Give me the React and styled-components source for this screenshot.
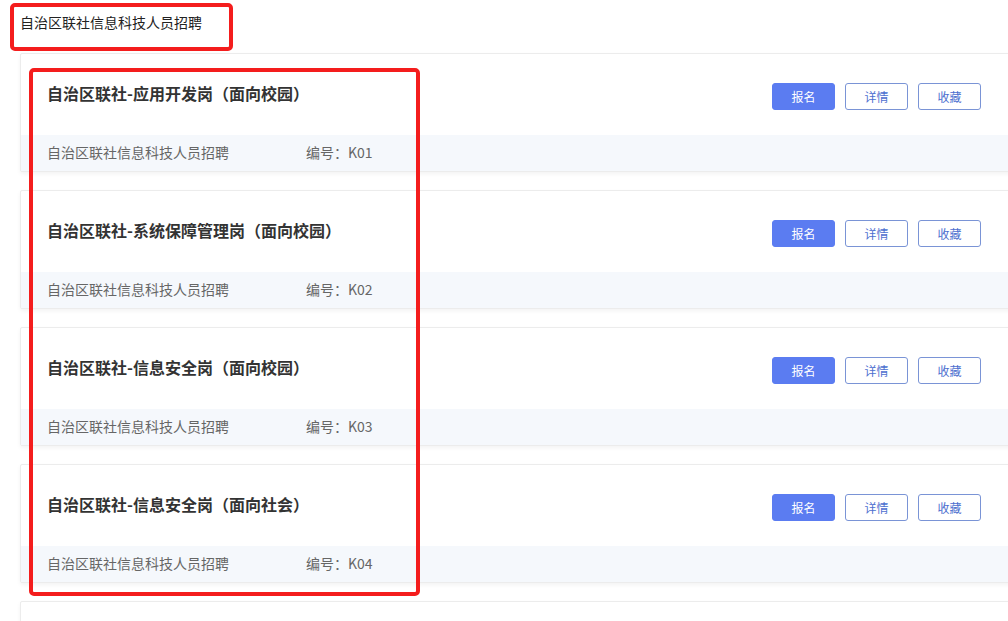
import styled, {createGlobalStyle} from 'styled-components';

const GlobalStyle = createGlobalStyle`
  html, body {
    margin: 0;
    padding: 0;
    background: #fff;
    overflow: hidden;
  }
  body {
    font-family: "Noto Sans CJK SC", "Noto Sans", sans-serif;
  }
`;

const Page = styled.div`
  position: relative;
  width: 1008px;
  height: 621px;
  overflow: hidden;
`;

const Header = styled.div`
  height: 53px;
  box-sizing: border-box;
  padding: 12px 0 0 20px;
  font-size: 14px;
  line-height: 20px;
  color: #222;
`;

const List = styled.div`
  padding-left: 20px;
`;

const Card = styled.div`
  width: 1010px;
  min-height: ${({stub}) => (stub ? '60px' : 'auto')};
  margin-bottom: 18px;
  background: #fff;
  border: 1px solid #ececec;
  border-radius: 2px;
  box-shadow: 0 2px 4px rgba(0, 0, 0, 0.05);
`;

const Top = styled.div`
  height: 81px;
  display: flex;
  align-items: center;
  justify-content: space-between;
  padding: 0 50px 0 27px;
`;

const Title = styled.div`
  font-size: 16px;
  font-weight: 700;
  color: #333;
  margin-top: -3px;
  margin-left: -1px;
`;

const Actions = styled.div`
  display: flex;
  gap: 10px;
  padding-top: 3px;
`;

const Button = styled.button`
  width: 63px;
  height: 27px;
  box-sizing: border-box;
  border-radius: 3px;
  font-family: inherit;
  font-size: 12px;
  padding: 0;
  cursor: pointer;
  border: 1px solid ${({primary}) => (primary ? '#5b7cf1' : '#7a94d6')};
  background: ${({primary}) => (primary ? '#5b7cf1' : '#fff')};
  color: ${({primary}) => (primary ? '#fff' : '#4d6fcf')};
`;

const Band = styled.div`
  height: 36px;
  box-sizing: border-box;
  display: flex;
  align-items: center;
  padding: 0 0 3px 27px;
  background: #f5f8fc;
  font-size: 14px;
  color: #666;
`;

const Org = styled.span`
  margin-left: -1px;
  width: 259px;
`;

const Mark = styled.div`
  position: absolute;
  box-sizing: border-box;
  border: 4px solid #f41d1d;
  border-radius: 5px;
  left: ${({x}) => x}px;
  top: ${({y}) => y}px;
  width: ${({w}) => w}px;
  height: ${({h}) => h}px;
  pointer-events: none;
`;

const jobs = [
  {title: '自治区联社-应用开发岗（面向校园）', code: 'K01'},
  {title: '自治区联社-系统保障管理岗（面向校园）', code: 'K02'},
  {title: '自治区联社-信息安全岗（面向校园）', code: 'K03'},
  {title: '自治区联社-信息安全岗（面向社会）', code: 'K04'},
];

const org = '自治区联社信息科技人员招聘';

export default function App() {
  return (
    <Page>
      <GlobalStyle />
      <Header>{org}</Header>
      <List>
        {jobs.map(job => (
          <Card key={job.code}>
            <Top>
              <Title>{job.title}</Title>
              <Actions>
                <Button primary>报名</Button>
                <Button>详情</Button>
                <Button>收藏</Button>
              </Actions>
            </Top>
            <Band>
              <Org>{org}</Org>
              <span>编号：{job.code}</span>
            </Band>
          </Card>
        ))}
        <Card stub />
      </List>
      <Mark x={10} y={3} w={223} h={48} />
      <Mark x={29} y={68} w={391} h={528} />
    </Page>
  );
}
